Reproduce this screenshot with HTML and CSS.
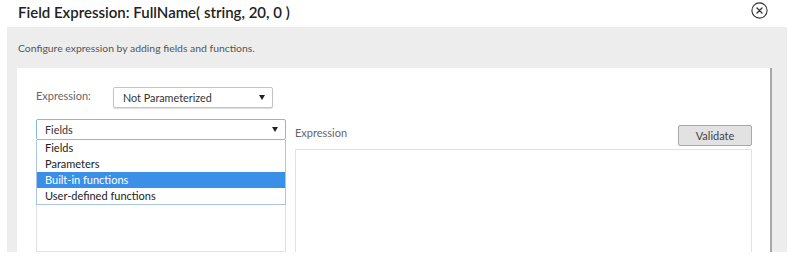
FILE: index.html
```html
<html>
<head>
<title>Field Expression</title>
<link rel="stylesheet" href="styles.css">
</head>
<body>
<div class="dialog">
	<div class="dlg_head">
		<h1 class="dlg_title">Field Expression: FullName( string, 20, 0 )</h1>
		<div class="close">
			<svg width="17" height="17" viewBox="0 0 17 17">
				<circle cx="8.5" cy="8.5" r="7.6" fill="none" stroke="#333" stroke-width="1.1"/>
				<path d="M6 6 L11 11 M11 6 L6 11" stroke="#333" stroke-width="1.3" stroke-linecap="round"/>
			</svg>
		</div>
	</div>
	<div class="dlg_body">
		<p class="hint">Configure expression by adding fields and functions.</p>
		<div class="panel">
			<div class="param_row">
				<span class="label">Expression:</span>
				<div class="select param_select">Not Parameterized<span class="caret"></span></div>
			</div>
			<div class="editor">
				<div class="source">
					<div class="select source_select">Fields<span class="caret"></span></div>
					<ul class="options">
						<li>Fields</li>
						<li>Parameters</li>
						<li class="active">Built-in functions</li>
						<li>User-defined functions</li>
					</ul>
					<div class="source_list"></div>
				</div>
				<div class="expr">
					<div class="expr_head">
						<span class="label">Expression</span>
						<button class="validate">Validate</button>
					</div>
					<div class="expr_area"></div>
				</div>
			</div>
		</div>
	</div>
</div>
</body>
</html>
```
FILE: styles.css
```css
body {
	margin: 0;
	background: #fff;
	font-family: Lato, "Open Sans", sans-serif;
	color: #333;
}
.dialog {
	width: 789px;
	height: 252px;
	display: flex;
	flex-direction: column;
}
.dlg_head {
	height: 27px;
	display: flex;
	align-items: center;
	justify-content: space-between;
	padding: 0 21px 0 18px;
}
.dlg_title {
	margin: 0;
	font-size: 15px;
	font-weight: 600;
	color: #222;
	margin-top: -4px;
}
.close {
	width: 17px;
	height: 17px;
	margin-top: -6px;
}
.dlg_body {
	flex: 1;
	margin: 0 2px 0 7px;
	background: #ededed;
	display: flex;
	flex-direction: column;
	overflow: hidden;
}
.hint {
	margin: 14px 0 13px 11px;
	font-size: 10.4px;
	line-height: 14px;
	color: #555;
}
.panel {
	flex: 1;
	width: 734px;
	margin-left: 10px;
	padding: 18px 0 0 19px;
	background: #fff;
	box-shadow: 2px 0 0 #a8a8a8;
	display: flex;
	flex-direction: column;
	min-height: 0;
}
.label {
	font-size: 11px;
	color: #666;
}
.param_row {
	display: flex;
	align-items: center;
	height: 22px;
}
.param_row .label {
	width: 77px;
	margin-top: -3px;
}
.select {
	position: relative;
	box-sizing: border-box;
	height: 21px;
	line-height: 19px;
	font-size: 10.8px;
	color: #333;
	border: 1px solid #c4c4c4;
	border-radius: 2px;
	background: #fff;
}
.caret {
	position: absolute;
	right: 7px;
	top: 7px;
	border-left: 3px solid transparent;
	border-right: 3px solid transparent;
	border-top: 5px solid #222;
}
.param_select {
	width: 160px;
	padding-left: 9px;
	box-shadow: 0 1px 1px #ddd;
}
.editor {
	flex: 1;
	display: flex;
	gap: 9px;
	margin-top: 11px;
	min-height: 0;
}
.source {
	width: 250px;
	display: flex;
	flex-direction: column;
}
.source_select {
	padding-left: 8px;
	border-color: #8cb6e8;
}
.options {
	list-style: none;
	margin: 0;
	padding: 0;
	border: 1px solid #a9c4e4;
	border-top: none;
	font-size: 11px;
}
.options li {
	height: 16px;
	line-height: 16px;
	padding-left: 8px;
	color: #222;
}
.options li.active {
	background: #3a8fe7;
	color: #fff;
}
.source_list {
	flex: 1;
	border: 1px solid #e2e2e2;
	border-top: none;
}
.expr {
	width: 457px;
	display: flex;
	flex-direction: column;
}
.expr_head {
	height: 27px;
	display: flex;
	align-items: center;
	justify-content: space-between;
}
.expr_head .label {
	margin-top: -1px;
}
.validate {
	width: 74px;
	height: 21px;
	margin-top: 6px;
	padding: 0;
	font-family: Lato, "Open Sans", sans-serif;
	font-size: 11px;
	color: #444;
	background: #e2e2e2;
	border: 1px solid #a9a9a9;
	border-radius: 2px;
}
.expr_area {
	flex: 1;
	margin-top: 3px;
	border: 1px solid #e2e2e2;
	border-bottom: none;
}
```
